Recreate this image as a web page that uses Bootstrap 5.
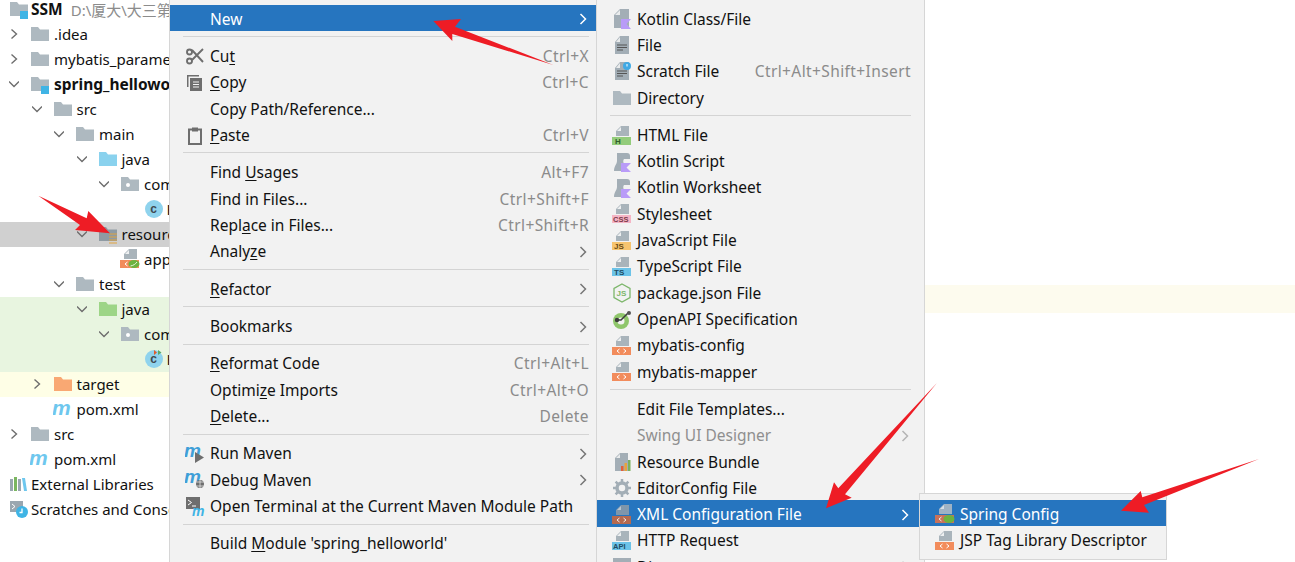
<!DOCTYPE html>
<html lang="en">
<head>
<meta charset="utf-8">
<title>IDE context menu</title>
<link href="https://cdn.jsdelivr.net/npm/bootstrap@5.3.0/dist/css/bootstrap.min.css" rel="stylesheet">
<style>
html,body{height:562px;overflow:hidden;background:#fff;}
body{font-family:"Noto Sans","Noto Sans CJK SC",sans-serif;font-size:15px;color:#111;position:relative;}
.stage{height:562px;}
.tree{width:169px;flex:none;margin-top:-3.5px;overflow:hidden;}
.tree b{font-size:15.5px;line-height:1;margin-top:2px;}
.trow{height:25px;white-space:nowrap;overflow:hidden;}
.lv1{padding-left:22.5px}.lv2{padding-left:45px}.lv3{padding-left:67.5px}.lv4{padding-left:90px}.lv5{padding-left:112.5px}
.lvtop{padding-left:9px}
.cslot{width:30px;flex:none;display:flex;align-items:center;}
.cslot svg{margin-left:9px;width:10px;height:12px;}
.tic{width:20px;height:20px;flex:none;margin-right:4px;}
.lvtop .tic{margin-right:2px;}
.sel-row{background:#d0d0d0;}
.new-row{background:#e8f5e0;}
.ign-row{background:#fefee6;}
.pathnote{color:#8c8c8c;margin-left:8px;margin-top:2px;}
.popup{background:#f2f2f2;border:1px solid #d6d6d6;border-width:0 1px;flex:none;overflow:hidden;padding-top:4.85px;font-size:15.5px;}
.m1{width:428px;}
.m2{width:328px;border-left:0;}
.mrow{height:26.3px;white-space:nowrap;padding:2.5px 7px 0 15px;}
.m2 .mrow{padding-right:13px;}
.mrow .mic{width:20px;height:20px;flex:none;margin-right:5px;}
.mrow .blank{width:20px;flex:none;margin-right:5px;}
.sc{color:#8b8b8b;margin-left:auto;letter-spacing:.4px;}
.arr{margin-left:auto;width:8px;height:14px;flex:none;color:#777;margin-right:2px;}
.hot{background:#2675bf;color:#fff;}
.hot .arr{color:#fff;}
.off{color:#8f8f8f;}
.off .arr{color:#b5b5b5;}
.sepb{height:11.1px;display:flex;align-items:center;padding:0 7px 0 13px;}
.m2 .sepb{padding-right:13px;}
.sepb i{display:block;height:1px;width:100%;background:#d4d4d4;}
.canvas{flex:1;}
.band{height:28px;margin-top:285px;background:#fdfbee;}
.sub{position:absolute;left:919px;top:493px;width:248px;height:67px;background:#f2f2f2;border:1px solid #d6d6d6;padding-top:6px;font-size:15.5px;}
.arrows{position:absolute;left:0;top:0;pointer-events:none;}
u{text-underline-offset:2px;}
svg text{font-family:"Liberation Sans",sans-serif;}
</style>
</head>
<body>
<svg width="0" height="0" class="position-absolute">
<defs>
<symbol id="chevR" viewBox="0 0 10 12"><path d="M2.500 1.500 7.500 6 2.500 10.500" fill="none" stroke="#6e6e6e" stroke-width="1.400"/></symbol>
<symbol id="chevD" viewBox="0 0 10 12"><path d="M0 3.500 5 8.500 10 3.500" fill="none" stroke="#6e6e6e" stroke-width="1.400"/></symbol>
<symbol id="arrow" viewBox="0 0 8 14"><path d="M1.500 2 6.500 7 1.500 12" fill="none" stroke="currentColor" stroke-width="1.500"/></symbol>
<symbol id="folder" viewBox="0 0 20 20"><path d="M1 3h7l2 2.500h9V17H1z" fill="currentColor"/></symbol>
<symbol id="docTop" viewBox="0 0 20 20"><path d="M9 0h8v10H4V5z" fill="#a9b4bb"/><path d="M9 1v4H5z" fill="#eef0f1"/></symbol>
<symbol id="docK" viewBox="0 0 20 20"><path d="M8 0h9v19H2V6z" fill="#a3aeb6"/><path d="M8 1v5H3z" fill="#e9ebec"/><path d="M9 10h10l-4.500 5 4.500 5H9z" fill="#b99bf8"/></symbol>
<symbol id="docL" viewBox="0 0 20 20"><path d="M8 0h9v18H3V6z" fill="#a3aeb6"/><path d="M8 1v5H4z" fill="#e9ebec"/><path d="M5 9h10M5 11.500h10M5 14h6" stroke="#555" stroke-width="1.100"/></symbol>
<symbol id="ktsc" viewBox="0 0 20 20"><path d="M5 1h10c2 0 3 1 3 3v3h-6c-1 1-1 3 0 5v7H2c0-5 3-7 3-10z" fill="#a3aeb6"/><path d="M9 11h10l-4.500 4.500L19 20H9z" fill="#b99bf8"/></symbol>
<symbol id="xmlf" viewBox="0 0 20 20"><use href="#docTop" width="20" height="20"/><rect x="0" y="11" width="19" height="8" fill="#f28c5c"/><path d="M7.500 13 5 15l2.500 2M11.500 13l2.500 2-2.500 2" fill="none" stroke="#fff" stroke-width="1"/></symbol>
<symbol id="leaf" viewBox="0 0 20 20"><use href="#xmlf" width="20" height="20"/><ellipse cx="14" cy="15" rx="5.500" ry="4" fill="#6db33f"/><path d="M10.500 17c3-.5 5-2 6.500-4" stroke="#e8f5e0" stroke-width="1" fill="none"/></symbol>
<symbol id="pomm" viewBox="0 0 20 20"><text x="-1" y="16" font-size="21" font-style="italic" font-weight="700" fill="#6ec7ee">m</text></symbol>
<symbol id="classC" viewBox="0 0 20 20"><circle cx="11" cy="10" r="9" fill="#8fd3ed"/><text x="7.200" y="14" font-size="12" font-weight="700" fill="#3f4a50">c</text></symbol>
</defs>
</svg>

<div class="stage d-flex">
  <div class="tree">
    <div class="trow lvtop d-flex align-items-center"><svg class="tic"><use href="#folder" color="#aeb9c0"/><rect x="11" y="12" width="8" height="8" fill="#3fb4e5"/></svg><b>SSM</b><span class="pathnote">D:\厦大\大三第一学期</span></div>
    <div class="trow d-flex align-items-center"><span class="cslot"><svg><use href="#chevR"/></svg></span><svg class="tic"><use href="#folder" color="#aeb9c0"/></svg>.idea</div>
    <div class="trow d-flex align-items-center"><span class="cslot"><svg><use href="#chevR"/></svg></span><svg class="tic"><use href="#folder" color="#aeb9c0"/></svg>mybatis_parameter</div>
    <div class="trow d-flex align-items-center"><span class="cslot"><svg><use href="#chevD"/></svg></span><svg class="tic"><use href="#folder" color="#aeb9c0"/><rect x="11" y="12" width="8" height="8" fill="#3fb4e5"/></svg><b>spring_helloworld</b></div>
    <div class="trow lv1 d-flex align-items-center"><span class="cslot"><svg><use href="#chevD"/></svg></span><svg class="tic"><use href="#folder" color="#aeb9c0"/></svg>src</div>
    <div class="trow lv2 d-flex align-items-center"><span class="cslot"><svg><use href="#chevD"/></svg></span><svg class="tic"><use href="#folder" color="#aeb9c0"/></svg>main</div>
    <div class="trow lv3 d-flex align-items-center"><span class="cslot"><svg><use href="#chevD"/></svg></span><svg class="tic"><use href="#folder" color="#8ad2ee"/></svg>java</div>
    <div class="trow lv4 d-flex align-items-center"><span class="cslot"><svg><use href="#chevD"/></svg></span><svg class="tic"><use href="#folder" color="#aeb9c0"/><circle cx="8" cy="11" r="2" fill="#fff"/></svg>com.example</div>
    <div class="trow lv5 d-flex align-items-center"><span class="cslot"></span><svg class="tic"><use href="#classC"/></svg>HelloWorld</div>
    <div class="trow lv3 sel-row d-flex align-items-center"><span class="cslot"><svg><use href="#chevD"/></svg></span><svg class="tic"><use href="#folder" color="#8f9ba3"/><path d="M11 10h8M11 13h8M11 16h8M11 19h8" stroke="#e2a43f" stroke-width="1.200"/></svg>resources</div>
    <div class="trow lv4 d-flex align-items-center"><span class="cslot"></span><svg class="tic"><use href="#leaf"/></svg>applicationContext.xml</div>
    <div class="trow lv2 d-flex align-items-center"><span class="cslot"><svg><use href="#chevD"/></svg></span><svg class="tic"><use href="#folder" color="#aeb9c0"/></svg>test</div>
    <div class="trow lv3 new-row d-flex align-items-center"><span class="cslot"><svg><use href="#chevD"/></svg></span><svg class="tic"><use href="#folder" color="#9dd587"/></svg>java</div>
    <div class="trow lv4 new-row d-flex align-items-center"><span class="cslot"><svg><use href="#chevD"/></svg></span><svg class="tic"><use href="#folder" color="#aeb9c0"/><circle cx="8" cy="11" r="2" fill="#fff"/></svg>com.example</div>
    <div class="trow lv5 new-row d-flex align-items-center"><span class="cslot"></span><svg class="tic"><use href="#classC"/><path d="M14 3.500 11 1v5z" fill="#e25c2b"/><path d="M15 1v5l3.500-2.500z" fill="#59a869"/></svg>HelloWorld</div>
    <div class="trow lv1 ign-row d-flex align-items-center"><span class="cslot"><svg><use href="#chevR"/></svg></span><svg class="tic"><use href="#folder" color="#f9a873"/></svg>target</div>
    <div class="trow lv1 d-flex align-items-center"><span class="cslot"></span><svg class="tic"><use href="#pomm"/></svg>pom.xml</div>
    <div class="trow d-flex align-items-center"><span class="cslot"><svg><use href="#chevR"/></svg></span><svg class="tic"><use href="#folder" color="#aeb9c0"/></svg>src</div>
    <div class="trow d-flex align-items-center"><span class="cslot"></span><svg class="tic"><use href="#pomm"/></svg>pom.xml</div>
    <div class="trow lvtop d-flex align-items-center"><svg class="tic"><path d="M1 5h3v12H1z" fill="#9aa7b0"/><path d="M5 3h3v14H5z" fill="#7bb661"/><path d="M9 5h3v12H9z" fill="#9aa7b0"/><path d="M13 4h3l2 13h-3z" fill="#6ec7ee"/></svg>External Libraries</div>
    <div class="trow lvtop d-flex align-items-center"><svg class="tic"><rect x="1" y="2" width="13" height="11" fill="#9aa7b0"/><path d="M3 5l3 2.500L3 10" stroke="#fff" fill="none"/><circle cx="13" cy="13" r="6" fill="#3fb4e5"/><path d="M13 9.500V13.500h-2.500" stroke="#fff" fill="none" stroke-width="1.300"/></svg>Scratches and Consoles</div>
  </div>

  <div class="popup m1">
    <div class="mrow hot d-flex align-items-center"><span class="blank"></span>New<svg class="arr"><use href="#arrow"/></svg></div>
    <div class="sepb"><i></i></div>
    <div class="mrow d-flex align-items-center"><svg class="mic" viewBox="0 0 20 20"><path d="M18 2 7 13M18 15 7 3" stroke="#6e6e6e" stroke-width="1.900" fill="none"/><circle cx="4.500" cy="5" r="2.500" fill="none" stroke="#6e6e6e" stroke-width="1.900"/><circle cx="4.500" cy="14" r="2.500" fill="none" stroke="#6e6e6e" stroke-width="1.900"/></svg><span>Cu<u>t</u></span><span class="sc">Ctrl+X</span></div>
    <div class="mrow d-flex align-items-center"><svg class="mic" viewBox="0 0 20 20"><path d="M2 2h12v1.500H3.500V14H2z" fill="#6e6e6e"/><rect x="5" y="5" width="12" height="13" fill="#6e6e6e"/><path d="M8 9h6M8 11.500h6M8 14h6" stroke="#f2f2f2" stroke-width="1"/></svg><span><u>C</u>opy</span><span class="sc">Ctrl+C</span></div>
    <div class="mrow d-flex align-items-center"><span class="blank"></span>Copy Path/Reference...</div>
    <div class="mrow d-flex align-items-center"><svg class="mic" viewBox="0 0 20 20"><rect x="4" y="3.500" width="12" height="14.500" fill="none" stroke="#6e6e6e" stroke-width="2"/><rect x="7" y="1.500" width="6" height="4" fill="#6e6e6e"/></svg><span><u>P</u>aste</span><span class="sc">Ctrl+V</span></div>
    <div class="sepb"><i></i></div>
    <div class="mrow d-flex align-items-center"><span class="blank"></span><span>Find <u>U</u>sages</span><span class="sc">Alt+F7</span></div>
    <div class="mrow d-flex align-items-center"><span class="blank"></span>Find in Files...<span class="sc">Ctrl+Shift+F</span></div>
    <div class="mrow d-flex align-items-center"><span class="blank"></span><span>Repl<u>a</u>ce in Files...</span><span class="sc">Ctrl+Shift+R</span></div>
    <div class="mrow d-flex align-items-center"><span class="blank"></span><span>Analy<u>z</u>e</span><svg class="arr"><use href="#arrow"/></svg></div>
    <div class="sepb"><i></i></div>
    <div class="mrow d-flex align-items-center"><span class="blank"></span><span><u>R</u>efactor</span><svg class="arr"><use href="#arrow"/></svg></div>
    <div class="sepb"><i></i></div>
    <div class="mrow d-flex align-items-center"><span class="blank"></span>Bookmarks<svg class="arr"><use href="#arrow"/></svg></div>
    <div class="sepb"><i></i></div>
    <div class="mrow d-flex align-items-center"><span class="blank"></span><span><u>R</u>eformat Code</span><span class="sc">Ctrl+Alt+L</span></div>
    <div class="mrow d-flex align-items-center"><span class="blank"></span><span>Optimi<u>z</u>e Imports</span><span class="sc">Ctrl+Alt+O</span></div>
    <div class="mrow d-flex align-items-center"><span class="blank"></span><span><u>D</u>elete...</span><span class="sc">Delete</span></div>
    <div class="sepb"><i></i></div>
    <div class="mrow d-flex align-items-center"><svg class="mic" viewBox="0 0 20 20"><text x="-1" y="13" font-size="19" font-style="italic" font-weight="700" fill="#3f9fd8">m</text><path d="M10 8l9 5.500-9 5.500z" fill="#6e6e6e"/></svg>Run Maven<svg class="arr"><use href="#arrow"/></svg></div>
    <div class="mrow d-flex align-items-center"><svg class="mic" viewBox="0 0 20 20"><text x="-1" y="13" font-size="19" font-style="italic" font-weight="700" fill="#3f9fd8">m</text><circle cx="15" cy="14" r="4" fill="#6e6e6e"/><path d="M10 12h10M10 16h10M15 9v9" stroke="#f2f2f2" stroke-width=".7"/></svg>Debug Maven<svg class="arr"><use href="#arrow"/></svg></div>
    <div class="mrow d-flex align-items-center"><svg class="mic" viewBox="0 0 20 20"><rect x="1" y="0" width="14" height="12" fill="#6e6e6e"/><path d="M3 3l3.500 2.500L3 8M7 9h4" stroke="#fff" fill="none"/><text x="7" y="19" font-size="14" font-style="italic" font-weight="700" fill="#3fb4e5">m</text></svg>Open Terminal at the Current Maven Module Path</div>
    <div class="sepb"><i></i></div>
    <div class="mrow d-flex align-items-center"><span class="blank"></span><span>Build <u>M</u>odule 'spring_helloworld'</span></div>
  </div>

  <div class="popup m2">
    <div class="mrow d-flex align-items-center"><svg class="mic"><use href="#docK"/></svg>Kotlin Class/File</div>
    <div class="mrow d-flex align-items-center"><svg class="mic"><use href="#docL"/></svg>File</div>
    <div class="mrow d-flex align-items-center"><svg class="mic"><use href="#docL"/><circle cx="15" cy="4" r="4" fill="#3fa9e5"/><path d="M15 2v2.500" stroke="#fff"/></svg>Scratch File<span class="sc">Ctrl+Alt+Shift+Insert</span></div>
    <div class="mrow d-flex align-items-center"><svg class="mic"><use href="#folder" color="#aeb9c0"/></svg>Directory</div>
    <div class="sepb"><i></i></div>
    <div class="mrow d-flex align-items-center"><svg class="mic"><use href="#docTop"/><rect x="0" y="11" width="19" height="8" fill="#93cc7b"/><text x="3" y="18.300" font-size="8" font-weight="700" fill="#2f5d2a">H</text></svg>HTML File</div>
    <div class="mrow d-flex align-items-center"><svg class="mic"><use href="#ktsc"/></svg>Kotlin Script</div>
    <div class="mrow d-flex align-items-center"><svg class="mic"><use href="#ktsc"/></svg>Kotlin Worksheet</div>
    <div class="mrow d-flex align-items-center"><svg class="mic"><use href="#docTop"/><rect x="0" y="11" width="19" height="8" fill="#f5b5c5"/><text x="1" y="18.300" font-size="7.500" font-weight="700" fill="#7a3a4a">CSS</text></svg>Stylesheet</div>
    <div class="mrow d-flex align-items-center"><svg class="mic"><use href="#docTop"/><rect x="0" y="11" width="19" height="8" fill="#f6c46f"/><text x="2" y="18.300" font-size="8" font-weight="700" fill="#6a4b14">JS</text></svg>JavaScript File</div>
    <div class="mrow d-flex align-items-center"><svg class="mic"><use href="#docTop"/><rect x="0" y="11" width="19" height="8" fill="#6cc3e8"/><text x="2" y="18.300" font-size="8" font-weight="700" fill="#1f4c63">TS</text></svg>TypeScript File</div>
    <div class="mrow d-flex align-items-center"><svg class="mic" viewBox="0 0 20 20"><path d="M10 1l8 4.500v9L10 19l-8-4.500v-9z" fill="none" stroke="#7cb66a" stroke-width="1.300"/><text x="4.500" y="13" font-size="8" font-weight="700" fill="#7cb66a">JS</text></svg>package.json File</div>
    <div class="mrow d-flex align-items-center"><svg class="mic" viewBox="0 0 20 20"><circle cx="9" cy="11" r="8" fill="#8fc66b"/><circle cx="9" cy="11" r="3.500" fill="#f2f2f2"/><path d="M3 10h6l8-8" stroke="#3c3c3c" stroke-width="1.500" fill="none"/><circle cx="17" cy="3" r="2" fill="#555"/><circle cx="5" cy="10" r="2.200" fill="#3c3c3c"/></svg>OpenAPI Specification</div>
    <div class="mrow d-flex align-items-center"><svg class="mic"><use href="#xmlf"/></svg>mybatis-config</div>
    <div class="mrow d-flex align-items-center"><svg class="mic"><use href="#xmlf"/></svg>mybatis-mapper</div>
    <div class="sepb"><i></i></div>
    <div class="mrow d-flex align-items-center"><span class="blank"></span>Edit File Templates...</div>
    <div class="mrow off d-flex align-items-center"><span class="blank"></span>Swing UI Designer<svg class="arr"><use href="#arrow"/></svg></div>
    <div class="mrow d-flex align-items-center"><svg class="mic" viewBox="0 0 20 20"><path d="M8 1h8v18H3V6z" fill="#a3aeb6"/><path d="M8 2v4H4z" fill="#e9ebec"/><rect x="9" y="14" width="2.500" height="5" fill="#e2603a"/><rect x="12.500" y="11" width="2.500" height="8" fill="#e8a33c"/><rect x="16" y="8" width="2.500" height="11" fill="#79b05c"/></svg>Resource Bundle</div>
    <div class="mrow d-flex align-items-center"><svg class="mic" viewBox="0 0 20 20"><circle cx="10" cy="10" r="5" fill="none" stroke="#a3aeb6" stroke-width="3.500"/><path d="M10 1v4M10 15v4M1 10h4M15 10h4M3.600 3.600l3 3M13.400 13.400l3 3M3.600 16.400l3-3M13.400 6.600l3-3" stroke="#a3aeb6" stroke-width="2.500"/></svg>EditorConfig File</div>
    <div class="mrow hot d-flex align-items-center"><svg class="mic" viewBox="0 0 20 20"><path d="M9 0h8v10H4V5z" fill="#7f96ab"/><path d="M9 1v4H5z" fill="#b9c6d2"/><rect x="0" y="11" width="19" height="8" fill="#b5694f"/><path d="M7.500 13 5 15l2.500 2M11.500 13l2.500 2-2.500 2" fill="none" stroke="#eee" stroke-width="1"/></svg>XML Configuration File<svg class="arr"><use href="#arrow"/></svg></div>
    <div class="mrow d-flex align-items-center"><svg class="mic"><use href="#docTop"/><rect x="0" y="11" width="19" height="8" fill="#6cc3e8"/><text x="1" y="18.300" font-size="7.500" font-weight="700" fill="#1f4c63">API</text></svg>HTTP Request</div>
    <div class="mrow d-flex align-items-center"><svg class="mic" viewBox="0 0 20 20"><rect x="1" y="1" width="18" height="18" fill="#a3aeb6"/></svg>Diagrams<svg class="arr"><use href="#arrow"/></svg></div>
  </div>

  <div class="canvas"><div class="band"></div></div>
</div>

<div class="sub">
  <div class="mrow hot d-flex align-items-center"><svg class="mic" viewBox="0 0 20 20"><path d="M9 0h8v10H4V5z" fill="#9eb2c4"/><path d="M9 1v4H5z" fill="#d5dee6"/><rect x="0" y="11" width="19" height="8" fill="#c9725a"/><path d="M6.500 13 4 15l2.500 2" fill="none" stroke="#eee" stroke-width="1"/><ellipse cx="14" cy="15" rx="5.500" ry="4" fill="#6db33f"/></svg>Spring Config</div>
  <div class="mrow d-flex align-items-center"><svg class="mic"><use href="#xmlf"/></svg>JSP Tag Library Descriptor</div>
</div>

<svg class="arrows" width="1295" height="562" viewBox="0 0 1295 562">
  <g fill="#ee1c25">
    <polygon points="433.300,21 461,19 455,26.700 553.300,65 452.300,34 452.300,41"/>
    <polygon points="38.300,195.700 86.700,218.300 88.300,211 110,233.300 75,230 80,225"/>
    <polygon points="936.700,383.300 838.300,488.300 834,482.300 826,508.300 851.700,497.700 845,494.300"/>
    <polygon points="1259,459 1142.300,497.300 1140.700,491 1121,510.700 1149,512.700 1144,505"/>
  </g>
</svg>
</body>
</html>
